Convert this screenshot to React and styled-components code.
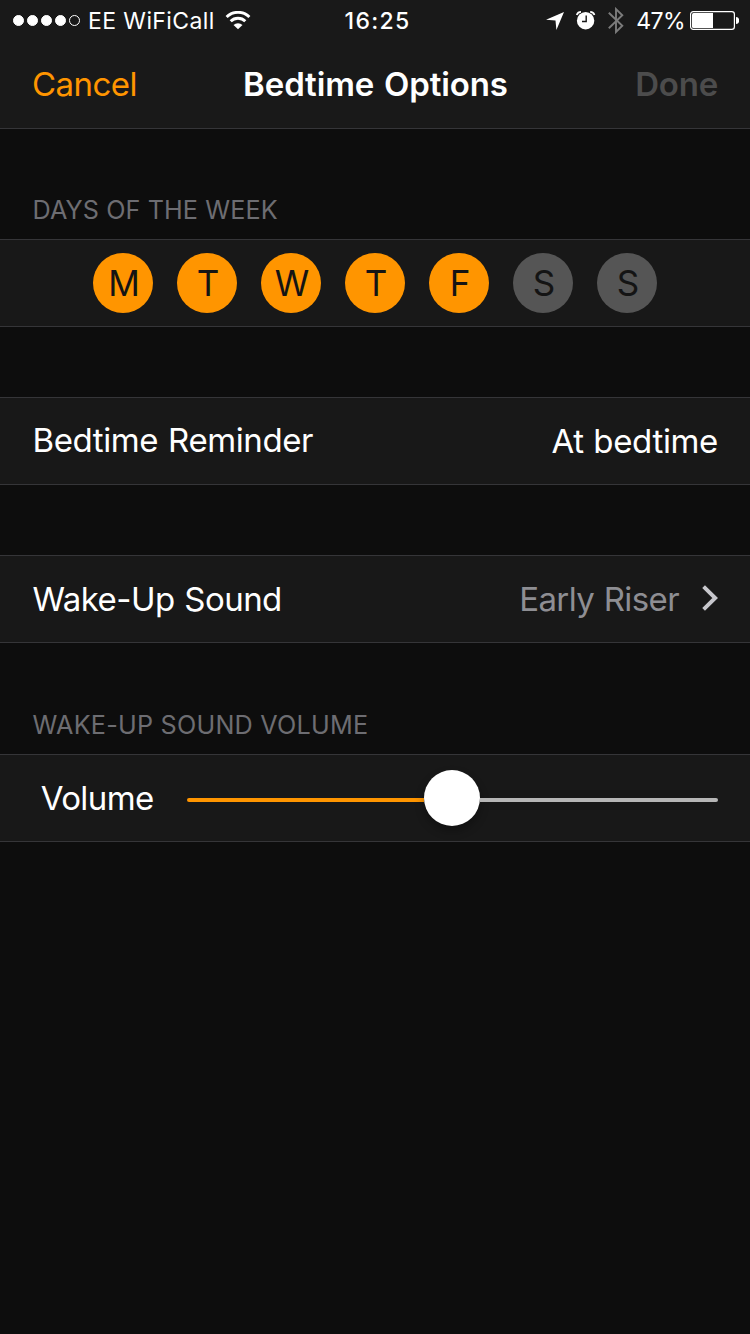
import React from 'react'
import styled, { createGlobalStyle } from 'styled-components'

const GlobalStyle = createGlobalStyle`
  html, body {
    margin: 0px;
    background-color: #0d0d0d;
  }
`
const Screen = styled.main`
  width: 750px;
  height: 1334px;
  overflow: hidden;
  background-color: #0d0d0d;
  color: #ffffff;
  font-family: Inter, 'Liberation Sans', sans-serif;
  font-size: 33px;
  line-height: 40px;
  white-space: nowrap;
`
const Header = styled.header`
  height: 128px;
  background-color: #191919;
  border-bottom: solid 1px #353538;
`
const StatusBar = styled.div`
  display: grid;
  grid-template-columns: 1fr auto 1fr;
  align-items: center;
  height: 40px;
  padding: 2px 11px 0 13px;
  box-sizing: border-box;
  font-size: 23px;
  line-height: 28px;
`
const StatusGroup = styled.div`
  display: flex;
  align-items: center;
  justify-content: ${props => (props.$end ? 'flex-end' : 'flex-start')};
`
const StatusIcons = styled.div`
  display: flex;
  align-items: center;
  gap: 12px;
  margin-right: 12px;
`
const Signal = styled.div`
  display: flex;
  gap: 3px;
  margin: 0 8px 1px 0;
`
const SignalDot = styled.span`
  width: 11px;
  height: 11px;
  box-sizing: border-box;
  border: solid 1px #ffffff;
  border-radius: 50%;
  background-color: ${props => (props.$filled ? '#ffffff' : 'transparent')};
`
const Carrier = styled.span`
  margin-right: 10.5px;
  letter-spacing: 0.4px;
`
const Clock = styled.span`
  padding-left: 3px;
  font-weight: 550;
  letter-spacing: 1.3px;
`
const Charge = styled.span`
  margin-right: 5px;
  letter-spacing: -0.6px;
`
const NavBar = styled.nav`
  display: grid;
  grid-template-columns: 1fr auto 1fr;
  align-items: center;
  height: 88px;
  padding: 0 32px;
`
const NavButton = styled.button`
  justify-self: ${props => (props.$end ? 'end' : 'start')};
  padding: 0px;
  border: 0px;
  background: transparent;
  color: ${props => (props.disabled ? '#4c4c4c' : '#ff9500')};
  font: inherit;
  font-weight: ${props => (props.$end ? 600 : 400)};
  letter-spacing: ${props => (props.$end ? '-0.2px' : '-0.55px')};
`
const Title = styled.h1`
  margin: 0px;
  padding-left: 1px;
  font-size: inherit;
  font-weight: 600;
  letter-spacing: -0.1px;
  word-spacing: 1.5px;
`
const Section = styled.section`
  padding-top: ${props => props.$top || '70px'};
`
const SectionLabel = styled.h2`
  height: 40px;
  margin: 0px;
  padding: 0 32.5px 9px;
  color: #6d6d72;
  font-size: 25.2px;
  font-weight: 400;
  letter-spacing: ${props => props.$spacing};
`
const Row = styled.div`
  display: flex;
  align-items: center;
  justify-content: space-between;
  height: 88px;
  box-sizing: border-box;
  padding: 0 32px 0 ${props => props.$inset || '32.5px'};
  border-top: solid 1px #353538;
  border-bottom: solid 1px #353538;
  background-color: #181818;
`
const DayRow = styled(Row)`
  justify-content: center;
  gap: 24px;
  padding: 0px;
`
const Day = styled.button`
  width: 60px;
  height: 60px;
  padding: 0 0 0 2px;
  border: 0px;
  border-radius: 50%;
  background-color: ${props => (props.$selected ? '#ff9500' : '#555555')};
  color: #141414;
  font: inherit;
  font-size: 35px;
`
const RowTitle = styled.span`
  padding-bottom: ${props => (props.$raised ? '2px' : '0px')};
  letter-spacing: ${props => props.$spacing};
  word-spacing: 1px;
`
const RowValue = styled.span`
  display: flex;
  align-items: center;
  gap: 23px;
  color: ${props => (props.$muted ? '#8e8e93' : '#ffffff')};
  letter-spacing: ${props => props.$spacing};
  word-spacing: 0.8px;
`
const Track = styled.div`
  display: flex;
  align-items: center;
  flex: 0 0 531px;
  height: 56px;
`
const TrackLine = styled.div`
  flex: ${props => (props.$filled ? 'none' : 1)};
  height: 4px;
  margin-top: 4px;
  border-radius: ${props => (props.$filled ? '2px 0 0 2px' : '0 2px 2px 0')};
  background-color: ${props => (props.$filled ? '#ff9500' : '#b6b6b6')};
`
const Thumb = styled.div`
  width: 56px;
  height: 56px;
  border-radius: 50%;
  background-color: #ffffff;
  box-shadow: 0 5px 10px rgba(0, 0, 0, 0.3);
`
const ChevronSvg = styled.svg`
  margin-bottom: 2px;
`

const WifiIcon = () => (
  <svg width="26" height="20" viewBox="0 0 26 20">
    <g fill="none" stroke="#fff" strokeWidth="2.9">
      <path d="M1.6 6a16.2 16.2 0 0 1 22.8 0" />
      <path d="M5.7 10.3a10.3 10.3 0 0 1 14.6 0" />
    </g>
    <path d="M13 18.2L8.500 14a6.600 6.600 0 0 1 9 0z" fill="#fff" />
  </svg>
)

const LocationIcon = () => (
  <svg width="18" height="18" viewBox="0 0 18 18">
    <path d="M18 0L10.4 18L9.5 8.6L0 7.8z" fill="#fff" />
  </svg>
)

const AlarmIcon = () => (
  <svg width="20" height="20" viewBox="0 0 20 20">
    <circle cx="9.6" cy="9.7" r="8.7" fill="#fff" />
    <path d="M10.2 4.5v6H6" fill="none" stroke="#191919" strokeWidth="1.4" />
    <path
      d="M.7 4A4.5 4.5 0 0 1 5 .9M18.5 4A4.5 4.5 0 0 0 14.2 .9"
      fill="none"
      stroke="#fff"
      strokeWidth="1.7"
    />
  </svg>
)

const BluetoothIcon = () => (
  <svg width="16" height="28" viewBox="0 0 16 28">
    <path
      d="M.8 5.8L14.3 18.8L8 24.9V2.1L14.3 8.2L.8 21.2"
      fill="none"
      stroke="#7b7b7b"
      strokeWidth="1.9"
    />
  </svg>
)

const BatteryIcon = () => (
  <svg width="49" height="20" viewBox="0 0 49 20">
    <rect x=".6" y=".6" width="43.8" height="17.8" rx="2.6" fill="none" stroke="#fff" strokeWidth="1.2" />
    <path d="M3.5 2H23v15H3.5A1.5 1.5 0 0 1 2 15.5V3.5A1.5 1.5 0 0 1 3.5 2z" fill="#fff" />
    <path d="M46 6a3.2 3.5 0 0 1 0 7z" fill="#fff" />
  </svg>
)

const Chevron = () => (
  <ChevronSvg width="16" height="26" viewBox="0 0 16 26">
    <path d="M1.6 1.6L13.2 13L1.6 24.4" fill="none" stroke="#c7c7cc" strokeWidth="3.9" />
  </ChevronSvg>
)

const days = [
  { name: 'M', selected: true },
  { name: 'T', selected: true },
  { name: 'W', selected: true },
  { name: 'T', selected: true },
  { name: 'F', selected: true },
  { name: 'S', selected: false },
  { name: 'S', selected: false },
]

const App = () => {
  const volume = 237
  return (
    <Screen>
      <GlobalStyle />
      <Header>
        <StatusBar>
          <StatusGroup>
            <Signal>
              {[1, 2, 3, 4, 5].map(dot => (
                <SignalDot key={dot} $filled={dot < 5} />
              ))}
            </Signal>
            <Carrier>EE WiFiCall</Carrier>
            <WifiIcon />
          </StatusGroup>
          <Clock>16:25</Clock>
          <StatusGroup $end>
            <StatusIcons>
              <LocationIcon />
              <AlarmIcon />
              <BluetoothIcon />
            </StatusIcons>
            <Charge>47%</Charge>
            <BatteryIcon />
          </StatusGroup>
        </StatusBar>
        <NavBar>
          <NavButton>Cancel</NavButton>
          <Title>Bedtime Options</Title>
          <NavButton $end disabled>
            Done
          </NavButton>
        </NavBar>
      </Header>
      <Section $top="61px">
        <SectionLabel $spacing="0.1px">DAYS OF THE WEEK</SectionLabel>
        <DayRow>
          {days.map((day, index) => (
            <Day key={index} $selected={day.selected}>
              {day.name}
            </Day>
          ))}
        </DayRow>
      </Section>
      <Section>
        <Row>
          <RowTitle $raised $spacing="-0.4px">
            Bedtime Reminder
          </RowTitle>
          <RowValue $spacing="-0.35px">At bedtime</RowValue>
        </Row>
      </Section>
      <Section>
        <Row>
          <RowTitle $spacing="-0.55px">Wake-Up Sound</RowTitle>
          <RowValue $muted $spacing="-0.6px">
            Early Riser
            <Chevron />
          </RowValue>
        </Row>
      </Section>
      <Section $top="62px">
        <SectionLabel $spacing="0.22px">WAKE-UP SOUND VOLUME</SectionLabel>
        <Row $inset="40.7px">
          <RowTitle $spacing="-0.6px">Volume</RowTitle>
          <Track>
            <TrackLine $filled style={{ width: volume }} />
            <Thumb />
            <TrackLine />
          </Track>
        </Row>
      </Section>
    </Screen>
  )
}

export default App
